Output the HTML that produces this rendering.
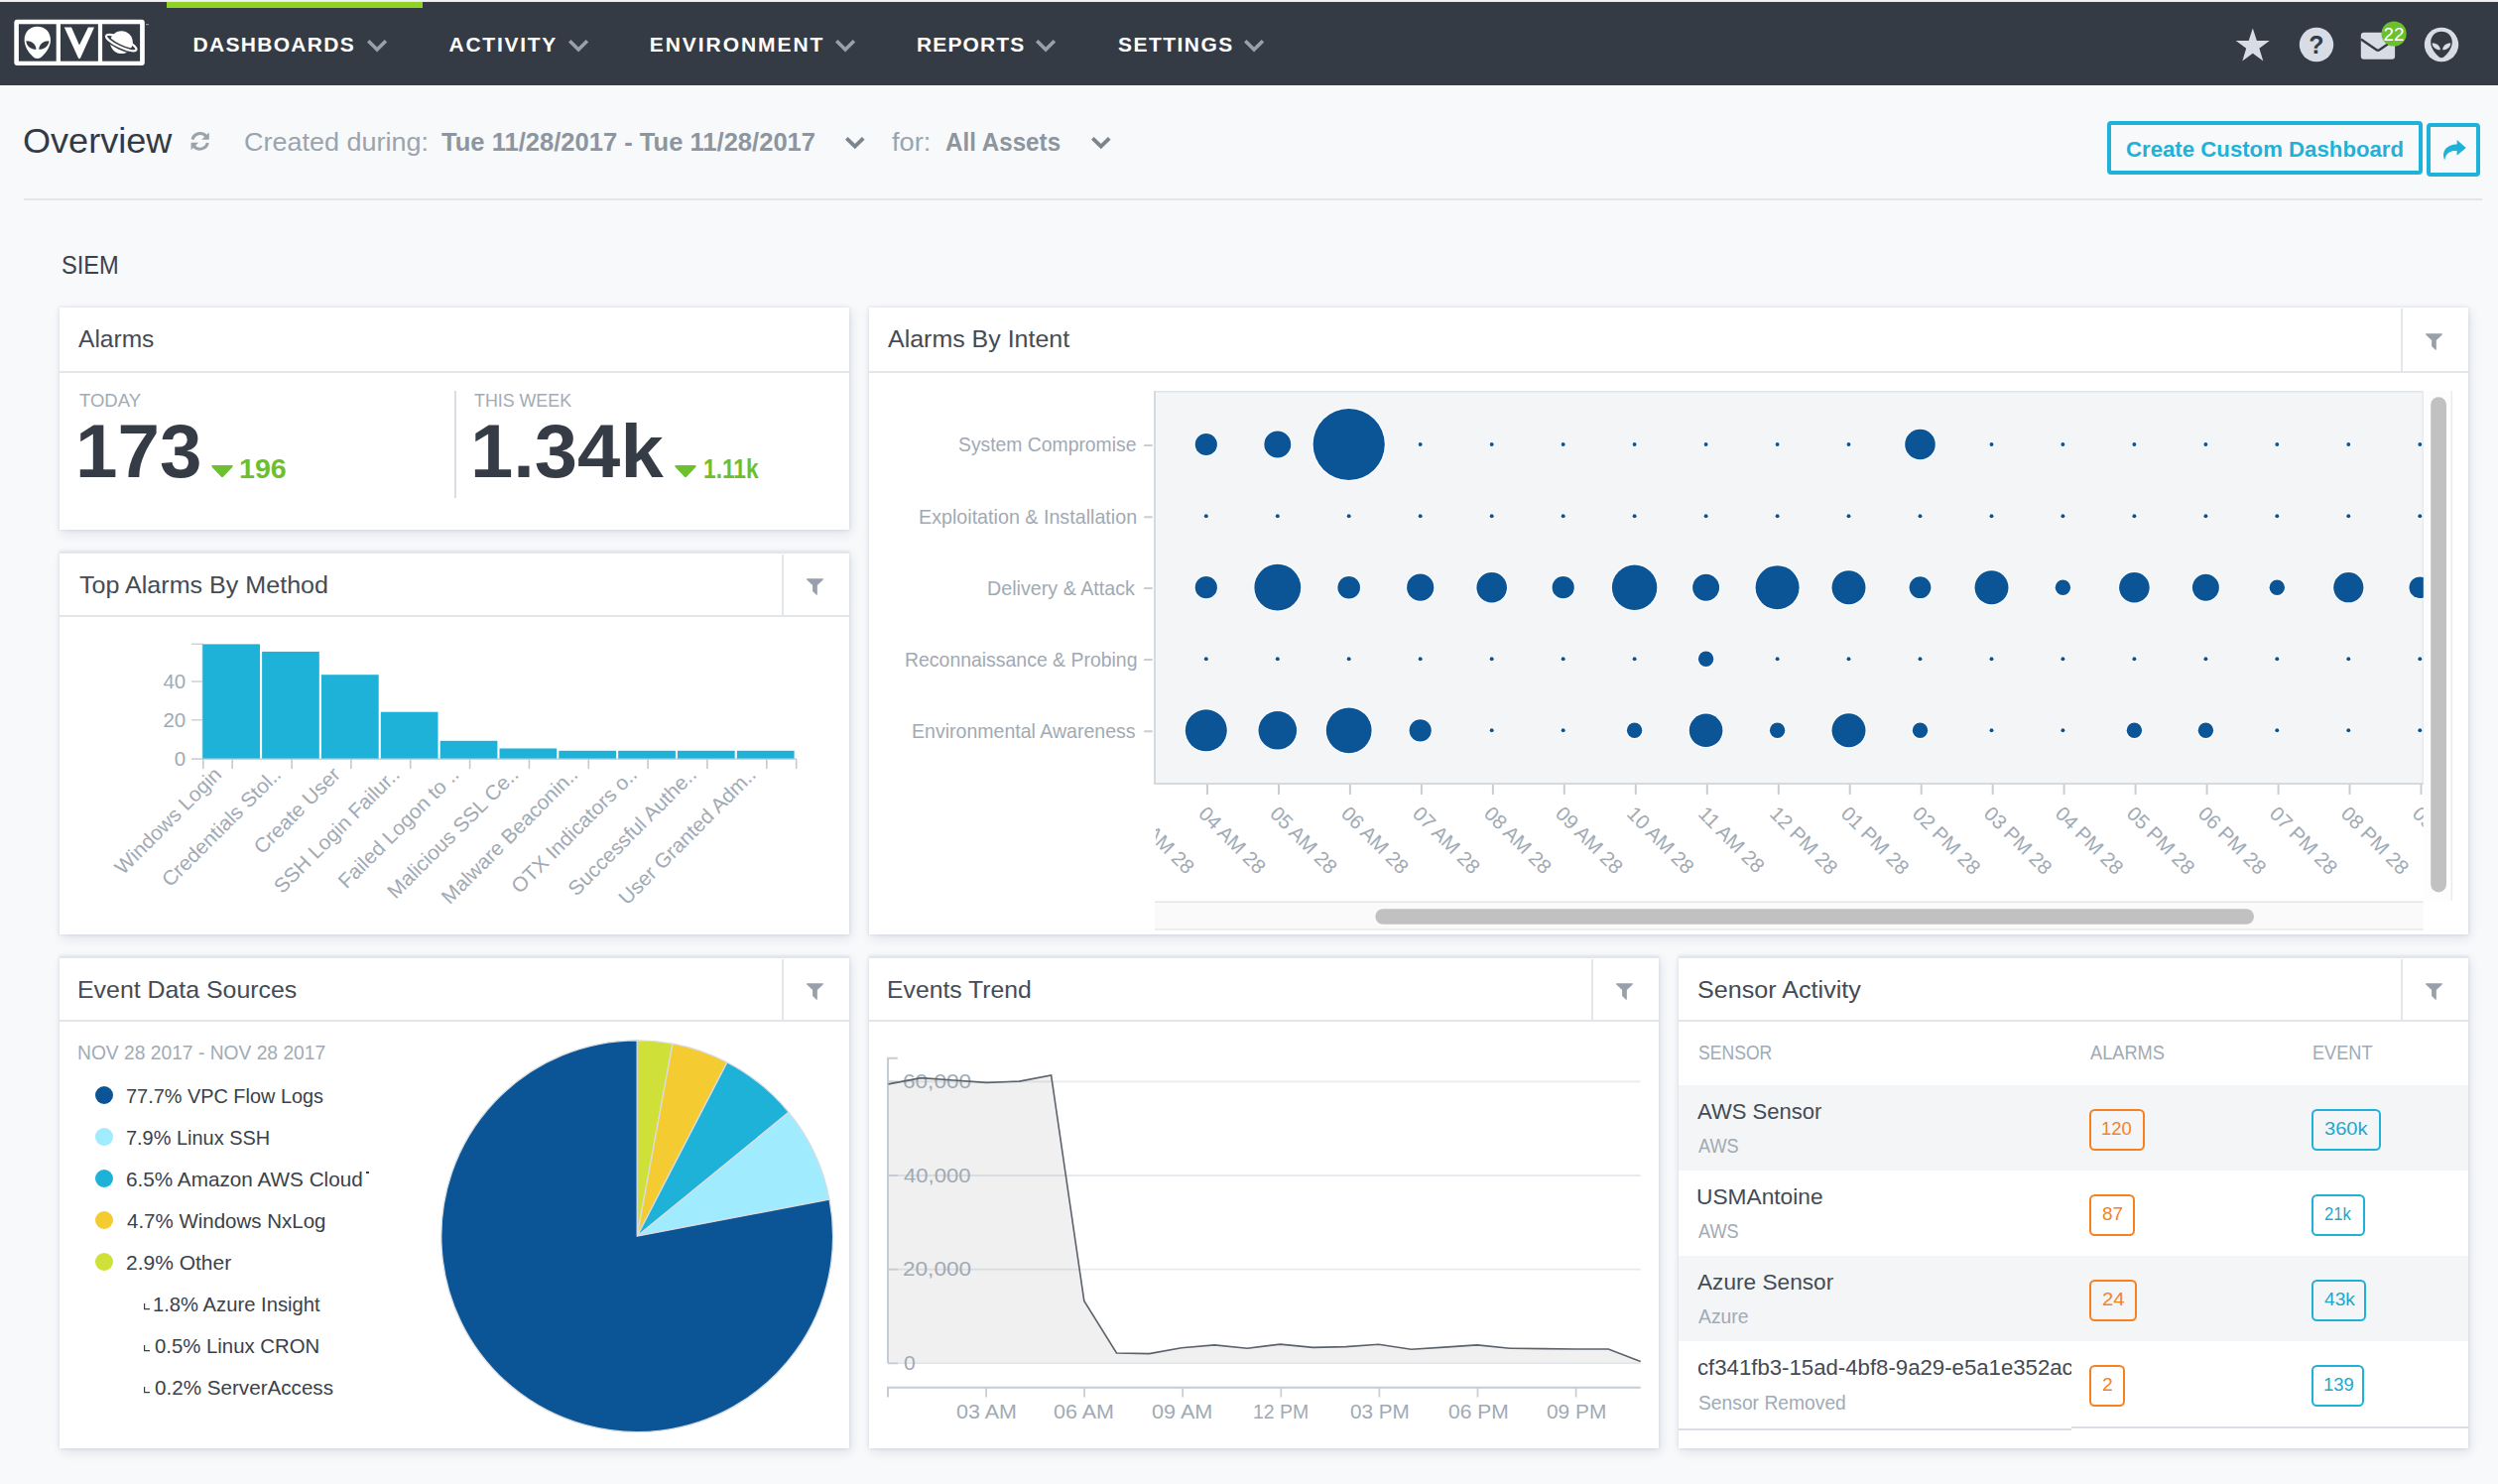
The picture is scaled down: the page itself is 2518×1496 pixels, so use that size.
<!DOCTYPE html>
<html lang="en"><head><meta charset="utf-8"><title>Overview - Dashboards</title>
<style>
*{box-sizing:border-box;margin:0;padding:0}
html,body{width:2518px;height:1496px;overflow:hidden}
body{position:relative;background:#f8f9fb;font-family:"Liberation Sans",sans-serif;color:#434a52}
.t{position:absolute;white-space:nowrap;line-height:1;transform-origin:0 0;display:block}
.abs{position:absolute}
#topstrip{position:absolute;left:0;top:0;width:2518px;height:2px;background:linear-gradient(#f6f6f6,#e6e6e6)}
#nav{position:absolute;left:0;top:2px;width:2518px;height:84px;background:#343b44}
#nav .active{position:absolute;left:168px;top:0;width:258px;height:6px;background:#90d226}
svg{position:absolute;overflow:visible}
.card{position:absolute;background:#fff;box-shadow:0 0 3px rgba(70,85,110,.17),2px 4px 10px rgba(70,85,110,.14)}
.card .hd{position:absolute;left:0;top:0;right:0;height:66px;border-bottom:2px solid #e3e7ec}
.card .fsep{position:absolute;top:0;width:2px;height:64px;background:#e3e7ec}
</style></head>
<body>
<div id="topstrip"></div>
<nav id="nav"><div class="active"></div>
<svg style="left:0;top:-2px" width="160" height="88" viewBox="0 0 160 88">
<rect x="14.3" y="19.8" width="131.5" height="46.3" rx="3" fill="#fff"/>
<rect x="18.9" y="24.3" width="37.8" height="37.4" fill="#343b44"/>
<rect x="61" y="24.3" width="37.9" height="37.4" fill="#343b44"/>
<rect x="103.1" y="24.3" width="38" height="37.4" fill="#343b44"/>
<path d="M37.7 26.8 C45.5 26.8 51 32.5 51 40.5 C51 48 44.5 55.5 40.8 58.2 C39.3 59.3 36.1 59.3 34.6 58.2 C30.9 55.5 24.6 48 24.6 40.5 C24.6 32.5 29.9 26.8 37.7 26.8 Z" fill="#fff"/>
<path d="M26.3 41.2 C31.5 41 36.3 44 36.5 49.8 C31 49.6 26.6 46.5 26.3 41.2 Z" fill="#343b44"/>
<path d="M49.4 41.2 C44.2 41 39.4 44 39.2 49.8 C44.7 49.6 49.1 46.5 49.4 41.2 Z" fill="#343b44"/>
<path d="M64.8 27.5 L72 27.5 L80 45.6 L88.9 27.5 L95 27.5 L81.2 58.3 Q80 60 78.8 58.3 Z" fill="#fff"/>
<g transform="rotate(25.5 122.2 43.1)">
<ellipse cx="122.2" cy="43.1" rx="16.8" ry="4.4" fill="none" stroke="#fff" stroke-width="2.2"/>
</g>
<circle cx="122.4" cy="42.6" r="11.4" fill="#fff"/>
<g transform="rotate(25.5 122.2 43.1)">
<path d="M105.4 43.1 A16.8 4.4 0 0 0 139 43.1" fill="none" stroke="#343b44" stroke-width="5.2"/>
<path d="M105.4 43.1 A16.8 4.4 0 0 0 139 43.1" fill="none" stroke="#fff" stroke-width="2.2"/>
</g>
<rect x="147" y="24" width="3" height="1.2" fill="#8b929b"/>
</svg>
<span class="t" style="left:194.6px;top:32.0px;font-size:21px;color:#fff;font-weight:700;letter-spacing:1.29px;">DASHBOARDS</span>
<svg style="left:370.0px;top:37.8px" width="20.2" height="12.6" viewBox="0 0 20.2 12.6"><path d="M1.27 1.27 L10.10 10.05 L18.93 1.27" fill="none" stroke="#98a1ab" stroke-width="3.6" stroke-linecap="butt" stroke-linejoin="miter"/></svg>
<span class="t" style="left:452.6px;top:32.0px;font-size:21px;color:#fff;font-weight:700;letter-spacing:1.72px;">ACTIVITY</span>
<svg style="left:573.0px;top:37.8px" width="20.2" height="12.6" viewBox="0 0 20.2 12.6"><path d="M1.27 1.27 L10.10 10.05 L18.93 1.27" fill="none" stroke="#98a1ab" stroke-width="3.6" stroke-linecap="butt" stroke-linejoin="miter"/></svg>
<span class="t" style="left:654.8px;top:32.0px;font-size:21px;color:#fff;font-weight:700;letter-spacing:1.94px;">ENVIRONMENT</span>
<svg style="left:842.2px;top:37.8px" width="20.2" height="12.6" viewBox="0 0 20.2 12.6"><path d="M1.27 1.27 L10.10 10.05 L18.93 1.27" fill="none" stroke="#98a1ab" stroke-width="3.6" stroke-linecap="butt" stroke-linejoin="miter"/></svg>
<span class="t" style="left:924.0px;top:32.0px;font-size:21px;color:#fff;font-weight:700;letter-spacing:1.13px;">REPORTS</span>
<svg style="left:1044.2px;top:37.8px" width="20.2" height="12.6" viewBox="0 0 20.2 12.6"><path d="M1.27 1.27 L10.10 10.05 L18.93 1.27" fill="none" stroke="#98a1ab" stroke-width="3.6" stroke-linecap="butt" stroke-linejoin="miter"/></svg>
<span class="t" style="left:1127.0px;top:32.0px;font-size:21px;color:#fff;font-weight:700;letter-spacing:1.47px;">SETTINGS</span>
<svg style="left:1254.4px;top:37.8px" width="20.2" height="12.6" viewBox="0 0 20.2 12.6"><path d="M1.27 1.27 L10.10 10.05 L18.93 1.27" fill="none" stroke="#98a1ab" stroke-width="3.6" stroke-linecap="butt" stroke-linejoin="miter"/></svg>
<svg style="left:2240px;top:-2px" width="270" height="88" viewBox="2240 0 270 88">
<path d="M2270.8 28.6 L2274.9 41.0 L2287.8 41.0 L2277.4 48.7 L2281.3 61.4 L2270.8 53.7 L2260.3 61.4 L2264.2 48.7 L2253.8 41.0 L2266.7 41.0 Z" fill="#d8dde5"/>
<circle cx="2335" cy="45" r="17.2" fill="#d8dde5"/>
<text x="2335" y="54" text-anchor="middle" font-family="Liberation Sans, sans-serif" font-weight="700" font-size="25" fill="#343b44">?</text>
<rect x="2379.8" y="32.8" width="34.3" height="27" rx="3" fill="#d8dde5"/>
<path d="M2379.8 39.5 L2395.5 50.2 Q2397 51.2 2398.5 50.2 L2414.1 39.5" fill="none" stroke="#343b44" stroke-width="2.4"/>
<circle cx="2413.1" cy="34" r="12.6" fill="#6cc02f"/>
<text x="2413.1" y="41.3" text-anchor="middle" font-family="Liberation Sans, sans-serif" font-size="19" fill="#fff" textLength="21" lengthAdjust="spacingAndGlyphs">22</text>
<circle cx="2461" cy="45" r="17.2" fill="#d8dde5"/>
<path d="M2461 31.8 C2467.3 31.8 2471.8 36.4 2471.8 42.6 C2471.8 49 2466.5 55 2463.4 57.5 C2462 58.6 2460 58.6 2458.6 57.5 C2455.5 55 2450.2 49 2450.2 42.6 C2450.2 36.4 2454.7 31.8 2461 31.8 Z" fill="#343b44"/>
<path d="M2451.6 43.4 C2455.8 43.2 2459.7 45.6 2459.9 50.3 C2455.4 50.2 2451.9 47.7 2451.6 43.4 Z" fill="#d8dde5"/>
<path d="M2470.4 43.4 C2466.2 43.2 2462.3 45.6 2462.1 50.3 C2466.6 50.2 2470.1 47.7 2470.4 43.4 Z" fill="#d8dde5"/>
</svg>
</nav>
<header id="hdr">
<span class="t" style="left:23.3px;top:125.0px;font-size:34.5px;color:#333a43;transform:scaleX(1.0458);">Overview</span>
<svg style="left:191px;top:132.1px" width="21.4" height="20.7" viewBox="0 0 22 22" preserveAspectRatio="none">
<path d="M3.2 9.2 A8 8 0 0 1 17.2 5.6" fill="none" stroke="#9aa3ab" stroke-width="3.2"/>
<path d="M20.4 1.6 L20.4 9.4 L12.6 9.4 Z" fill="#9aa3ab"/>
<path d="M18.8 12.8 A8 8 0 0 1 4.8 16.4" fill="none" stroke="#9aa3ab" stroke-width="3.2"/>
<path d="M1.6 20.4 L1.6 12.6 L9.4 12.6 Z" fill="#9aa3ab"/>
</svg>
<span class="t" style="left:245.5px;top:130.0px;font-size:26.5px;color:#9ba4ac;transform:scaleX(1.0189);">Created during:</span>
<span class="t" style="left:445.3px;top:130.0px;font-size:26.5px;color:#8d969e;font-weight:700;transform:scaleX(0.9645);">Tue 11/28/2017 - Tue 11/28/2017</span>
<svg style="left:851.6px;top:138.2px" width="19.6" height="12.4" viewBox="0 0 19.6 12.4"><path d="M1.34 1.34 L9.80 9.71 L18.26 1.34" fill="none" stroke="#7d858c" stroke-width="3.8" stroke-linecap="butt" stroke-linejoin="miter"/></svg>
<span class="t" style="left:899.3px;top:130.0px;font-size:26.5px;color:#9ba4ac;transform:scaleX(1.0271);">for:</span>
<span class="t" style="left:953.1px;top:130.0px;font-size:26.5px;color:#8d969e;font-weight:700;transform:scaleX(0.9129);">All Assets</span>
<svg style="left:1099.6px;top:138.2px" width="19.6" height="12.4" viewBox="0 0 19.6 12.4"><path d="M1.34 1.34 L9.80 9.71 L18.26 1.34" fill="none" stroke="#7d858c" stroke-width="3.8" stroke-linecap="butt" stroke-linejoin="miter"/></svg>
<div class="abs" style="left:2124.3px;top:122.1px;width:317.4px;height:53.7px;border:4px solid #1fb2d8;border-radius:4px"></div>
<span class="t" style="left:2142.7px;top:140.0px;font-size:22.4px;color:#1fb2d8;font-weight:700;transform:scaleX(0.9916);">Create Custom Dashboard</span>
<div class="abs" style="left:2446px;top:124.3px;width:53.9px;height:53.5px;border:4px solid #1fb2d8;border-radius:4px"></div>
<svg style="left:2461px;top:140px" width="26" height="23" viewBox="0 0 26 23">
<path d="M15.6 1 L24.8 8.9 L15.6 16.8 L15.6 12 C9.5 11.6 4.6 13.8 3.2 21.4 C-0.6 12.6 5.6 5.6 15.6 5.6 Z" fill="#1fb2d8"/>
</svg>
<div class="abs" style="left:24px;top:200px;width:2478px;height:2px;background:#e2e5ea"></div>
</header>
<span class="t" style="left:62.0px;top:255.0px;font-size:25px;color:#3c434b;transform:scaleX(0.9452);">SIEM</span>
<section class="card" id="alarms" style="left:60px;top:310px;width:796px;height:224px;">
<div class="abs" style="left:0;top:64px;width:796px;height:2px;background:#e3e7ec"></div>
<span class="t" style="left:19.2px;top:20.0px;font-size:24.8px;color:#434b54;transform:scaleX(0.9902);">Alarms</span>
<span class="t" style="left:19.5px;top:84.0px;font-size:19.2px;color:#a1abb5;transform:scaleX(0.9639);">TODAY</span>
<span class="t" style="left:15.5px;top:107.0px;font-size:76px;color:#363c45;font-weight:700;transform:scaleX(1.0047);">173</span>
<svg style="left:152.9px;top:158.9px" width="22" height="12.4" viewBox="0 0 22 12.4"><path d="M1.6 0 H20.4 Q22.6 0.2 21.2 2 L12.2 11.6 Q11 12.8 9.8 11.6 L0.8 2 Q-0.6 0.2 1.6 0 Z" fill="#6cbf2d"/></svg>
<span class="t" style="left:181.4px;top:150.0px;font-size:26.8px;color:#6cbf2d;font-weight:700;transform:scaleX(1.0676);">196</span>
<div class="abs" style="left:398px;top:84px;width:2px;height:108px;background:#d9dde3"></div>
<span class="t" style="left:418.2px;top:84.0px;font-size:19.2px;color:#a1abb5;transform:scaleX(0.9287);">THIS WEEK</span>
<span class="t" style="left:414.1px;top:107.0px;font-size:76px;color:#363c45;font-weight:700;transform:scaleX(1.0234);">1.34k</span>
<svg style="left:620.2px;top:158.9px" width="22" height="12.4" viewBox="0 0 22 12.4"><path d="M1.6 0 H20.4 Q22.6 0.2 21.2 2 L12.2 11.6 Q11 12.8 9.8 11.6 L0.8 2 Q-0.6 0.2 1.6 0 Z" fill="#6cbf2d"/></svg>
<span class="t" style="left:649.1px;top:150.0px;font-size:26.8px;color:#6cbf2d;font-weight:700;transform:scaleX(0.8473);">1.11k</span>
</section>
<section class="card" id="top-alarms" style="left:60px;top:556px;width:796px;height:386px;border-top:2px solid #e3e6ea;">
<div class="abs" style="left:0;top:62px;width:796px;height:2px;background:#e3e7ec"></div>
<span class="t" style="left:19.6px;top:20.0px;font-size:24.8px;color:#434b54;transform:scaleX(1.0118);">Top Alarms By Method</span>
<div class="abs" style="left:728px;top:1px;width:2px;height:61px;background:#e3e7ec"></div>
<svg style="left:753px;top:24.7px" width="17" height="17" viewBox="0 0 17 17"><path d="M0.3 0.3 H16.7 Q17.2 0.8 16.7 1.4 L10.85 7 V16.4 Q10.4 16.9 9.7 16.4 L6.1 13.1 V7 L0.3 1.4 Q-0.2 0.8 0.3 0.3 Z" fill="#98a1ab"/></svg>
<svg style="left:0;top:0" width="796" height="384" viewBox="60 558 796 384" font-family="Liberation Sans, sans-serif">
<path d="M193 649.3 H204.3 V765.1 M193 687 H204.3 M193 725.8 H204.3" fill="none" stroke="#cdd2d8" stroke-width="1.4"/>
<path d="M193 765.1 H802.7" fill="none" stroke="#cdd2d8" stroke-width="1.6"/>
<text x="187.2" y="694.2" text-anchor="end" font-size="20.5" fill="#a1aab4">40</text>
<text x="187.2" y="733.0" text-anchor="end" font-size="20.5" fill="#a1aab4">20</text>
<text x="187.2" y="771.8" text-anchor="end" font-size="20.5" fill="#a1aab4">0</text>
<rect x="204.3" y="649.4" width="57.7" height="115.2" fill="#1fb2d8"/>
<rect x="264.1" y="656.9" width="57.7" height="107.7" fill="#1fb2d8"/>
<rect x="324.0" y="680.2" width="57.7" height="84.4" fill="#1fb2d8"/>
<rect x="383.8" y="717.7" width="57.7" height="46.9" fill="#1fb2d8"/>
<rect x="443.7" y="746.8" width="57.7" height="17.8" fill="#1fb2d8"/>
<rect x="503.5" y="754.5" width="57.7" height="10.1" fill="#1fb2d8"/>
<rect x="563.3" y="756.8" width="57.7" height="7.8" fill="#1fb2d8"/>
<rect x="623.2" y="756.8" width="57.7" height="7.8" fill="#1fb2d8"/>
<rect x="683.0" y="756.8" width="57.7" height="7.8" fill="#1fb2d8"/>
<rect x="742.9" y="756.8" width="57.7" height="7.8" fill="#1fb2d8"/>
<path d="M204.8 765.1 V774.9 M234.2 765.1 V774.9 M294.1 765.1 V774.9 M353.9 765.1 V774.9 M413.7 765.1 V774.9 M473.6 765.1 V774.9 M533.4 765.1 V774.9 M593.3 765.1 V774.9 M653.1 765.1 V774.9 M712.9 765.1 V774.9 M772.8 765.1 V774.9 M802.7 765.1 V774.9" fill="none" stroke="#c5cad1" stroke-width="1.6"/>
<text transform="translate(224.6 782) rotate(-45) scale(1.025 1)" text-anchor="end" font-size="20.5" fill="#a1aab4">Windows Login</text>
<text transform="translate(284.5 782) rotate(-45) scale(1.025 1)" text-anchor="end" font-size="20.5" fill="#a1aab4">Credentials Stol..</text>
<text transform="translate(344.3 782) rotate(-45) scale(1.025 1)" text-anchor="end" font-size="20.5" fill="#a1aab4">Create User</text>
<text transform="translate(404.1 782) rotate(-45) scale(1.025 1)" text-anchor="end" font-size="20.5" fill="#a1aab4">SSH Login Failur..</text>
<text transform="translate(464.0 782) rotate(-45) scale(1.025 1)" text-anchor="end" font-size="20.5" fill="#a1aab4">Failed Logon to ..</text>
<text transform="translate(523.8 782) rotate(-45) scale(1.025 1)" text-anchor="end" font-size="20.5" fill="#a1aab4">Malicious SSL Ce..</text>
<text transform="translate(583.7 782) rotate(-45) scale(1.025 1)" text-anchor="end" font-size="20.5" fill="#a1aab4">Malware Beaconin..</text>
<text transform="translate(643.5 782) rotate(-45) scale(1.025 1)" text-anchor="end" font-size="20.5" fill="#a1aab4">OTX Indicators o..</text>
<text transform="translate(703.3 782) rotate(-45) scale(1.025 1)" text-anchor="end" font-size="20.5" fill="#a1aab4">Successful Authe..</text>
<text transform="translate(763.2 782) rotate(-45) scale(1.025 1)" text-anchor="end" font-size="20.5" fill="#a1aab4">User Granted Adm..</text>
</svg>
</section>
<section class="card" id="alarms-intent" style="left:876px;top:310px;width:1612px;height:632px;">
<div class="abs" style="left:0;top:64px;width:1612px;height:2px;background:#e3e7ec"></div>
<span class="t" style="left:19.0px;top:20.0px;font-size:24.8px;color:#434b54;transform:scaleX(1.0065);">Alarms By Intent</span>
<div class="abs" style="left:1544px;top:1px;width:2px;height:63px;background:#e3e7ec"></div>
<svg style="left:1569px;top:26.3px" width="17" height="17" viewBox="0 0 17 17"><path d="M0.3 0.3 H16.7 Q17.2 0.8 16.7 1.4 L10.85 7 V16.4 Q10.4 16.9 9.7 16.4 L6.1 13.1 V7 L0.3 1.4 Q-0.2 0.8 0.3 0.3 Z" fill="#98a1ab"/></svg>
<span class="t" style="left:89.9px;top:129.0px;font-size:19.8px;color:#a1aab4;transform:scaleX(0.9773);">System Compromise</span>
<span class="t" style="left:50.2px;top:202.0px;font-size:19.8px;color:#a1aab4;transform:scaleX(0.9958);">Exploitation &amp; Installation</span>
<span class="t" style="left:119.2px;top:274.0px;font-size:19.8px;color:#a1aab4;transform:scaleX(0.9959);">Delivery &amp; Attack</span>
<span class="t" style="left:35.8px;top:346.0px;font-size:19.8px;color:#a1aab4;transform:scaleX(0.9826);">Reconnaissance &amp; Probing</span>
<span class="t" style="left:42.5px;top:418.0px;font-size:19.8px;color:#a1aab4;transform:scaleX(0.9880);">Environmental Awareness</span>
<svg style="left:0;top:0" width="1612" height="632" viewBox="876 310 1612 632" font-family="Liberation Sans, sans-serif">
<defs><clipPath id="bclip"><rect x="1165" y="394" width="1277.8" height="520"/></clipPath></defs>
<rect x="1164" y="394" width="1278.8" height="396" fill="#f4f5f7"/>
<path d="M1164 394.8 H2442.8" stroke="#dfe3e8" stroke-width="1.6" fill="none"/>
<path d="M2442.2 394 V790" stroke="#e6e9ed" stroke-width="1.4" fill="none"/>
<path d="M1164 394 V789.9 H2442.8" stroke="#d5dae0" stroke-width="2" fill="none"/>
<path d="M1153.1 448.9 H1161.7 M1153.1 521.2 H1161.7 M1153.1 593.1 H1161.7 M1153.1 665.1 H1161.7 M1153.1 737.2 H1161.7" stroke="#c9ced5" stroke-width="2" fill="none"/>
<g clip-path="url(#bclip)">
<circle cx="1215.8" cy="448.0" r="11.1" fill="#0b5596" stroke="#fff" stroke-width="2" paint-order="stroke"/>
<circle cx="1287.8" cy="448.0" r="13.45" fill="#0b5596" stroke="#fff" stroke-width="2" paint-order="stroke"/>
<circle cx="1359.7" cy="448.0" r="36.1" fill="#0b5596" stroke="#fff" stroke-width="2" paint-order="stroke"/>
<circle cx="1431.7" cy="448.0" r="2.0" fill="#0b5596" stroke="#fff" stroke-width="1.4" paint-order="stroke"/>
<circle cx="1503.7" cy="448.0" r="2.0" fill="#0b5596" stroke="#fff" stroke-width="1.4" paint-order="stroke"/>
<circle cx="1575.7" cy="448.0" r="2.0" fill="#0b5596" stroke="#fff" stroke-width="1.4" paint-order="stroke"/>
<circle cx="1647.6" cy="448.0" r="2.0" fill="#0b5596" stroke="#fff" stroke-width="1.4" paint-order="stroke"/>
<circle cx="1719.6" cy="448.0" r="2.0" fill="#0b5596" stroke="#fff" stroke-width="1.4" paint-order="stroke"/>
<circle cx="1791.6" cy="448.0" r="2.0" fill="#0b5596" stroke="#fff" stroke-width="1.4" paint-order="stroke"/>
<circle cx="1863.5" cy="448.0" r="2.0" fill="#0b5596" stroke="#fff" stroke-width="1.4" paint-order="stroke"/>
<circle cx="1935.5" cy="448.0" r="15.3" fill="#0b5596" stroke="#fff" stroke-width="2" paint-order="stroke"/>
<circle cx="2007.5" cy="448.0" r="2.0" fill="#0b5596" stroke="#fff" stroke-width="1.4" paint-order="stroke"/>
<circle cx="2079.4" cy="448.0" r="2.0" fill="#0b5596" stroke="#fff" stroke-width="1.4" paint-order="stroke"/>
<circle cx="2151.4" cy="448.0" r="2.0" fill="#0b5596" stroke="#fff" stroke-width="1.4" paint-order="stroke"/>
<circle cx="2223.4" cy="448.0" r="2.0" fill="#0b5596" stroke="#fff" stroke-width="1.4" paint-order="stroke"/>
<circle cx="2295.3" cy="448.0" r="2.0" fill="#0b5596" stroke="#fff" stroke-width="1.4" paint-order="stroke"/>
<circle cx="2367.3" cy="448.0" r="2.0" fill="#0b5596" stroke="#fff" stroke-width="1.4" paint-order="stroke"/>
<circle cx="2439.3" cy="448.0" r="2.0" fill="#0b5596" stroke="#fff" stroke-width="1.4" paint-order="stroke"/>
<circle cx="1215.8" cy="520.3" r="2.0" fill="#0b5596" stroke="#fff" stroke-width="1.4" paint-order="stroke"/>
<circle cx="1287.8" cy="520.3" r="2.0" fill="#0b5596" stroke="#fff" stroke-width="1.4" paint-order="stroke"/>
<circle cx="1359.7" cy="520.3" r="2.0" fill="#0b5596" stroke="#fff" stroke-width="1.4" paint-order="stroke"/>
<circle cx="1431.7" cy="520.3" r="2.0" fill="#0b5596" stroke="#fff" stroke-width="1.4" paint-order="stroke"/>
<circle cx="1503.7" cy="520.3" r="2.0" fill="#0b5596" stroke="#fff" stroke-width="1.4" paint-order="stroke"/>
<circle cx="1575.7" cy="520.3" r="2.0" fill="#0b5596" stroke="#fff" stroke-width="1.4" paint-order="stroke"/>
<circle cx="1647.6" cy="520.3" r="2.0" fill="#0b5596" stroke="#fff" stroke-width="1.4" paint-order="stroke"/>
<circle cx="1719.6" cy="520.3" r="2.0" fill="#0b5596" stroke="#fff" stroke-width="1.4" paint-order="stroke"/>
<circle cx="1791.6" cy="520.3" r="2.0" fill="#0b5596" stroke="#fff" stroke-width="1.4" paint-order="stroke"/>
<circle cx="1863.5" cy="520.3" r="2.0" fill="#0b5596" stroke="#fff" stroke-width="1.4" paint-order="stroke"/>
<circle cx="1935.5" cy="520.3" r="2.0" fill="#0b5596" stroke="#fff" stroke-width="1.4" paint-order="stroke"/>
<circle cx="2007.5" cy="520.3" r="2.0" fill="#0b5596" stroke="#fff" stroke-width="1.4" paint-order="stroke"/>
<circle cx="2079.4" cy="520.3" r="2.0" fill="#0b5596" stroke="#fff" stroke-width="1.4" paint-order="stroke"/>
<circle cx="2151.4" cy="520.3" r="2.0" fill="#0b5596" stroke="#fff" stroke-width="1.4" paint-order="stroke"/>
<circle cx="2223.4" cy="520.3" r="2.0" fill="#0b5596" stroke="#fff" stroke-width="1.4" paint-order="stroke"/>
<circle cx="2295.3" cy="520.3" r="2.0" fill="#0b5596" stroke="#fff" stroke-width="1.4" paint-order="stroke"/>
<circle cx="2367.3" cy="520.3" r="2.0" fill="#0b5596" stroke="#fff" stroke-width="1.4" paint-order="stroke"/>
<circle cx="2439.3" cy="520.3" r="2.0" fill="#0b5596" stroke="#fff" stroke-width="1.4" paint-order="stroke"/>
<circle cx="1215.8" cy="592.2" r="11.1" fill="#0b5596" stroke="#fff" stroke-width="2" paint-order="stroke"/>
<circle cx="1287.8" cy="592.2" r="23.4" fill="#0b5596" stroke="#fff" stroke-width="2" paint-order="stroke"/>
<circle cx="1359.7" cy="592.2" r="11.3" fill="#0b5596" stroke="#fff" stroke-width="2" paint-order="stroke"/>
<circle cx="1431.7" cy="592.2" r="13.6" fill="#0b5596" stroke="#fff" stroke-width="2" paint-order="stroke"/>
<circle cx="1503.7" cy="592.2" r="15.3" fill="#0b5596" stroke="#fff" stroke-width="2" paint-order="stroke"/>
<circle cx="1575.7" cy="592.2" r="11.1" fill="#0b5596" stroke="#fff" stroke-width="2" paint-order="stroke"/>
<circle cx="1647.6" cy="592.2" r="22.7" fill="#0b5596" stroke="#fff" stroke-width="2" paint-order="stroke"/>
<circle cx="1719.6" cy="592.2" r="13.45" fill="#0b5596" stroke="#fff" stroke-width="2" paint-order="stroke"/>
<circle cx="1791.6" cy="592.2" r="22" fill="#0b5596" stroke="#fff" stroke-width="2" paint-order="stroke"/>
<circle cx="1863.5" cy="592.2" r="17" fill="#0b5596" stroke="#fff" stroke-width="2" paint-order="stroke"/>
<circle cx="1935.5" cy="592.2" r="10.9" fill="#0b5596" stroke="#fff" stroke-width="2" paint-order="stroke"/>
<circle cx="2007.5" cy="592.2" r="17" fill="#0b5596" stroke="#fff" stroke-width="2" paint-order="stroke"/>
<circle cx="2079.4" cy="592.2" r="7.7" fill="#0b5596" stroke="#fff" stroke-width="2" paint-order="stroke"/>
<circle cx="2151.4" cy="592.2" r="15.3" fill="#0b5596" stroke="#fff" stroke-width="2" paint-order="stroke"/>
<circle cx="2223.4" cy="592.2" r="13.45" fill="#0b5596" stroke="#fff" stroke-width="2" paint-order="stroke"/>
<circle cx="2295.3" cy="592.2" r="7.7" fill="#0b5596" stroke="#fff" stroke-width="2" paint-order="stroke"/>
<circle cx="2367.3" cy="592.2" r="15.1" fill="#0b5596" stroke="#fff" stroke-width="2" paint-order="stroke"/>
<circle cx="2439.3" cy="592.2" r="10.8" fill="#0b5596" stroke="#fff" stroke-width="2" paint-order="stroke"/>
<circle cx="1215.8" cy="664.2" r="2.0" fill="#0b5596" stroke="#fff" stroke-width="1.4" paint-order="stroke"/>
<circle cx="1287.8" cy="664.2" r="2.0" fill="#0b5596" stroke="#fff" stroke-width="1.4" paint-order="stroke"/>
<circle cx="1359.7" cy="664.2" r="2.0" fill="#0b5596" stroke="#fff" stroke-width="1.4" paint-order="stroke"/>
<circle cx="1431.7" cy="664.2" r="2.0" fill="#0b5596" stroke="#fff" stroke-width="1.4" paint-order="stroke"/>
<circle cx="1503.7" cy="664.2" r="2.0" fill="#0b5596" stroke="#fff" stroke-width="1.4" paint-order="stroke"/>
<circle cx="1575.7" cy="664.2" r="2.0" fill="#0b5596" stroke="#fff" stroke-width="1.4" paint-order="stroke"/>
<circle cx="1647.6" cy="664.2" r="2.0" fill="#0b5596" stroke="#fff" stroke-width="1.4" paint-order="stroke"/>
<circle cx="1719.6" cy="664.2" r="7.7" fill="#0b5596" stroke="#fff" stroke-width="2" paint-order="stroke"/>
<circle cx="1791.6" cy="664.2" r="2.0" fill="#0b5596" stroke="#fff" stroke-width="1.4" paint-order="stroke"/>
<circle cx="1863.5" cy="664.2" r="2.0" fill="#0b5596" stroke="#fff" stroke-width="1.4" paint-order="stroke"/>
<circle cx="1935.5" cy="664.2" r="2.0" fill="#0b5596" stroke="#fff" stroke-width="1.4" paint-order="stroke"/>
<circle cx="2007.5" cy="664.2" r="2.0" fill="#0b5596" stroke="#fff" stroke-width="1.4" paint-order="stroke"/>
<circle cx="2079.4" cy="664.2" r="2.0" fill="#0b5596" stroke="#fff" stroke-width="1.4" paint-order="stroke"/>
<circle cx="2151.4" cy="664.2" r="2.0" fill="#0b5596" stroke="#fff" stroke-width="1.4" paint-order="stroke"/>
<circle cx="2223.4" cy="664.2" r="2.0" fill="#0b5596" stroke="#fff" stroke-width="1.4" paint-order="stroke"/>
<circle cx="2295.3" cy="664.2" r="2.0" fill="#0b5596" stroke="#fff" stroke-width="1.4" paint-order="stroke"/>
<circle cx="2367.3" cy="664.2" r="2.0" fill="#0b5596" stroke="#fff" stroke-width="1.4" paint-order="stroke"/>
<circle cx="2439.3" cy="664.2" r="2.0" fill="#0b5596" stroke="#fff" stroke-width="1.4" paint-order="stroke"/>
<circle cx="1215.8" cy="736.3" r="21" fill="#0b5596" stroke="#fff" stroke-width="2" paint-order="stroke"/>
<circle cx="1287.8" cy="736.3" r="19.3" fill="#0b5596" stroke="#fff" stroke-width="2" paint-order="stroke"/>
<circle cx="1359.7" cy="736.3" r="22.9" fill="#0b5596" stroke="#fff" stroke-width="2" paint-order="stroke"/>
<circle cx="1431.7" cy="736.3" r="11.1" fill="#0b5596" stroke="#fff" stroke-width="2" paint-order="stroke"/>
<circle cx="1503.7" cy="736.3" r="2.0" fill="#0b5596" stroke="#fff" stroke-width="1.4" paint-order="stroke"/>
<circle cx="1575.7" cy="736.3" r="2.0" fill="#0b5596" stroke="#fff" stroke-width="1.4" paint-order="stroke"/>
<circle cx="1647.6" cy="736.3" r="7.7" fill="#0b5596" stroke="#fff" stroke-width="2" paint-order="stroke"/>
<circle cx="1719.6" cy="736.3" r="16.8" fill="#0b5596" stroke="#fff" stroke-width="2" paint-order="stroke"/>
<circle cx="1791.6" cy="736.3" r="7.7" fill="#0b5596" stroke="#fff" stroke-width="2" paint-order="stroke"/>
<circle cx="1863.5" cy="736.3" r="17" fill="#0b5596" stroke="#fff" stroke-width="2" paint-order="stroke"/>
<circle cx="1935.5" cy="736.3" r="7.7" fill="#0b5596" stroke="#fff" stroke-width="2" paint-order="stroke"/>
<circle cx="2007.5" cy="736.3" r="2.0" fill="#0b5596" stroke="#fff" stroke-width="1.4" paint-order="stroke"/>
<circle cx="2079.4" cy="736.3" r="2.0" fill="#0b5596" stroke="#fff" stroke-width="1.4" paint-order="stroke"/>
<circle cx="2151.4" cy="736.3" r="7.7" fill="#0b5596" stroke="#fff" stroke-width="2" paint-order="stroke"/>
<circle cx="2223.4" cy="736.3" r="7.7" fill="#0b5596" stroke="#fff" stroke-width="2" paint-order="stroke"/>
<circle cx="2295.3" cy="736.3" r="2.0" fill="#0b5596" stroke="#fff" stroke-width="1.4" paint-order="stroke"/>
<circle cx="2367.3" cy="736.3" r="2.0" fill="#0b5596" stroke="#fff" stroke-width="1.4" paint-order="stroke"/>
<circle cx="2439.3" cy="736.3" r="2.0" fill="#0b5596" stroke="#fff" stroke-width="1.4" paint-order="stroke"/>
<path d="M1217.0 790.8 V801 M1289.0 790.8 V801 M1360.9 790.8 V801 M1432.9 790.8 V801 M1504.9 790.8 V801 M1576.8 790.8 V801 M1648.8 790.8 V801 M1720.8 790.8 V801 M1792.8 790.8 V801 M1864.7 790.8 V801 M1936.7 790.8 V801 M2008.7 790.8 V801 M2080.6 790.8 V801 M2152.6 790.8 V801 M2224.6 790.8 V801 M2296.6 790.8 V801 M2368.5 790.8 V801 M2440.5 790.8 V801" stroke="#c9ced5" stroke-width="2" fill="none"/>
<text transform="translate(1134.9 821.6) rotate(45)" font-size="20.3" fill="#a1aab4">03 AM 28</text>
<text transform="translate(1206.9 821.6) rotate(45)" font-size="20.3" fill="#a1aab4">04 AM 28</text>
<text transform="translate(1278.9 821.6) rotate(45)" font-size="20.3" fill="#a1aab4">05 AM 28</text>
<text transform="translate(1350.8 821.6) rotate(45)" font-size="20.3" fill="#a1aab4">06 AM 28</text>
<text transform="translate(1422.8 821.6) rotate(45)" font-size="20.3" fill="#a1aab4">07 AM 28</text>
<text transform="translate(1494.8 821.6) rotate(45)" font-size="20.3" fill="#a1aab4">08 AM 28</text>
<text transform="translate(1566.8 821.6) rotate(45)" font-size="20.3" fill="#a1aab4">09 AM 28</text>
<text transform="translate(1638.7 821.6) rotate(45)" font-size="20.3" fill="#a1aab4">10 AM 28</text>
<text transform="translate(1710.7 821.6) rotate(45)" font-size="20.3" fill="#a1aab4">11 AM 28</text>
<text transform="translate(1782.7 821.6) rotate(45)" font-size="20.3" fill="#a1aab4">12 PM 28</text>
<text transform="translate(1854.6 821.6) rotate(45)" font-size="20.3" fill="#a1aab4">01 PM 28</text>
<text transform="translate(1926.6 821.6) rotate(45)" font-size="20.3" fill="#a1aab4">02 PM 28</text>
<text transform="translate(1998.6 821.6) rotate(45)" font-size="20.3" fill="#a1aab4">03 PM 28</text>
<text transform="translate(2070.5 821.6) rotate(45)" font-size="20.3" fill="#a1aab4">04 PM 28</text>
<text transform="translate(2142.5 821.6) rotate(45)" font-size="20.3" fill="#a1aab4">05 PM 28</text>
<text transform="translate(2214.5 821.6) rotate(45)" font-size="20.3" fill="#a1aab4">06 PM 28</text>
<text transform="translate(2286.4 821.6) rotate(45)" font-size="20.3" fill="#a1aab4">07 PM 28</text>
<text transform="translate(2358.4 821.6) rotate(45)" font-size="20.3" fill="#a1aab4">08 PM 28</text>
<text transform="translate(2430.4 821.6) rotate(45)" font-size="20.3" fill="#a1aab4">09 PM 28</text>
</g>
<rect x="2443" y="394" width="28.6" height="514" fill="#fdfdfd"/>
<path d="M2471.4 394 V908" stroke="#e9ebee" stroke-width="1.4" fill="none"/>
<rect x="2450.2" y="400.2" width="15.8" height="499.2" rx="7.9" fill="#c1c1c1"/>
<rect x="1164" y="908.8" width="1278.8" height="28.6" fill="#fafafa"/>
<path d="M1164 909.3 H2442.8 M1164 936.9 H2442.8" stroke="#e6e6e6" stroke-width="1.4" fill="none"/>
<rect x="1386.3" y="916.2" width="885.7" height="15.6" rx="7.8" fill="#c1c1c1"/>
</svg>
</section>
<section class="card" id="event-sources" style="left:60px;top:964px;width:796px;height:496.3px;border-top:2px solid #e3e6ea;">
<div class="abs" style="left:0;top:62px;width:796px;height:2px;background:#e3e7ec"></div>
<span class="t" style="left:17.8px;top:20.0px;font-size:24.8px;color:#434b54;transform:scaleX(1.0035);">Event Data Sources</span>
<div class="abs" style="left:728px;top:1px;width:2px;height:61px;background:#e3e7ec"></div>
<svg style="left:753px;top:24.7px" width="17" height="17" viewBox="0 0 17 17"><path d="M0.3 0.3 H16.7 Q17.2 0.8 16.7 1.4 L10.85 7 V16.4 Q10.4 16.9 9.7 16.4 L6.1 13.1 V7 L0.3 1.4 Q-0.2 0.8 0.3 0.3 Z" fill="#98a1ab"/></svg>
<span class="t" style="left:17.5px;top:86.0px;font-size:19.4px;color:#a1abb5;transform:scaleX(0.9918);">NOV 28 2017 - NOV 28 2017</span>
<div class="abs" style="left:35.9px;top:129.3px;width:18.2px;height:18.2px;border-radius:50%;background:#0b5596"></div>
<span class="t" style="left:66.6px;top:128.0px;font-size:21px;color:#3a4149;transform:scaleX(0.9473);">77.7% VPC Flow Logs</span>
<div class="abs" style="left:35.9px;top:171.3px;width:18.2px;height:18.2px;border-radius:50%;background:#a0ebfd"></div>
<span class="t" style="left:66.6px;top:170.0px;font-size:21px;color:#3a4149;transform:scaleX(0.9492);">7.9% Linux SSH</span>
<div class="abs" style="left:35.9px;top:213.2px;width:18.2px;height:18.2px;border-radius:50%;background:#1fb2d8"></div>
<span class="t" style="left:66.5px;top:212.0px;font-size:21px;color:#3a4149;transform:scaleX(0.9866);">6.5% Amazon AWS Cloud</span>
<div class="abs" style="left:35.9px;top:255.2px;width:18.2px;height:18.2px;border-radius:50%;background:#f4cb30"></div>
<span class="t" style="left:67.5px;top:254.0px;font-size:21px;color:#3a4149;transform:scaleX(0.9758);">4.7% Windows NxLog</span>
<div class="abs" style="left:35.9px;top:297.1px;width:18.2px;height:18.2px;border-radius:50%;background:#cfe039"></div>
<span class="t" style="left:66.5px;top:296.0px;font-size:21px;color:#3a4149;transform:scaleX(0.9997);">2.9% Other</span>
<div class="abs" style="left:308.6px;top:215.4px;width:3.5px;height:1.6px;background:#3a4149"></div>
<svg style="left:84.8px;top:347.9px" width="7" height="7" viewBox="0 0 7 7"><path d="M0.6 0 V5.6 H6" fill="none" stroke="#3a4149" stroke-width="1.2"/></svg>
<span class="t" style="left:93.9px;top:338.0px;font-size:21px;color:#3a4149;transform:scaleX(0.9633);">1.8% Azure Insight</span>
<svg style="left:84.8px;top:389.8px" width="7" height="7" viewBox="0 0 7 7"><path d="M0.6 0 V5.6 H6" fill="none" stroke="#3a4149" stroke-width="1.2"/></svg>
<span class="t" style="left:95.6px;top:380.0px;font-size:21px;color:#3a4149;transform:scaleX(0.9689);">0.5% Linux CRON</span>
<svg style="left:84.8px;top:431.7px" width="7" height="7" viewBox="0 0 7 7"><path d="M0.6 0 V5.6 H6" fill="none" stroke="#3a4149" stroke-width="1.2"/></svg>
<span class="t" style="left:95.6px;top:422.0px;font-size:21px;color:#3a4149;transform:scaleX(0.9823);">0.2% ServerAccess</span>
<svg style="left:0;top:0" width="796" height="494.3" viewBox="60 966 796 494.3">
<path d="M642.2 1246.2 L642.20 1048.80 A197.4 197.4 0 0 1 677.97 1052.07 Z" fill="#cfe039" stroke="#d9dde2" stroke-width="1.3" stroke-linejoin="round"/>
<path d="M642.2 1246.2 L677.97 1052.07 A197.4 197.4 0 0 1 732.92 1070.88 Z" fill="#f4cb30" stroke="#d9dde2" stroke-width="1.3" stroke-linejoin="round"/>
<path d="M642.2 1246.2 L732.92 1070.88 A197.4 197.4 0 0 1 795.09 1121.33 Z" fill="#1fb2d8" stroke="#d9dde2" stroke-width="1.3" stroke-linejoin="round"/>
<path d="M642.2 1246.2 L795.09 1121.33 A197.4 197.4 0 0 1 836.10 1209.21 Z" fill="#a0ebfd" stroke="#d9dde2" stroke-width="1.3" stroke-linejoin="round"/>
<path d="M642.2 1246.2 L836.10 1209.21 A197.4 197.4 0 1 1 642.20 1048.80 Z" fill="#0b5596" stroke="#d9dde2" stroke-width="1.3" stroke-linejoin="round"/>
</svg>
</section>
<section class="card" id="events-trend" style="left:876px;top:964px;width:796.3px;height:496.3px;border-top:2px solid #e3e6ea;">
<div class="abs" style="left:0;top:62px;width:796.3px;height:2px;background:#e3e7ec"></div>
<span class="t" style="left:18.2px;top:20.0px;font-size:24.8px;color:#434b54;transform:scaleX(0.9982);">Events Trend</span>
<div class="abs" style="left:728.3px;top:1px;width:2px;height:61px;background:#e3e7ec"></div>
<svg style="left:753.3px;top:24.7px" width="17" height="17" viewBox="0 0 17 17"><path d="M0.3 0.3 H16.7 Q17.2 0.8 16.7 1.4 L10.85 7 V16.4 Q10.4 16.9 9.7 16.4 L6.1 13.1 V7 L0.3 1.4 Q-0.2 0.8 0.3 0.3 Z" fill="#98a1ab"/></svg>
<svg style="left:0;top:0" width="796.3" height="494.3" viewBox="876 966 796.3 494.3">
<path d="M895 1090.4 H1653.7 M895 1185.0 H1653.7 M895 1279.6 H1653.7" stroke="#e7eaee" stroke-width="1.8" fill="none"/>
<path d="M895.5 1374.3 L895.5 1092.9 L928.3 1086.6 L961.3 1089 L994.4 1091.4 L1027.4 1090.1 L1059.6 1084 L1092.8 1311.4 L1125.5 1364 L1158.5 1364.6 L1191 1358.8 L1224.3 1355.9 L1257.3 1359.2 L1290.3 1355.1 L1323.6 1358.4 L1356.6 1357.6 L1389.6 1355.3 L1422.5 1360.3 L1455.8 1358.1 L1488.9 1355.9 L1522.1 1359.2 L1555.2 1359.6 L1588.2 1360 L1621.3 1360 L1653.7 1372.6 L1653.7 1374.3 Z" fill="#000" fill-opacity="0.06"/>
<path d="M895 1374.3 H1653.7" stroke="#e2e4e6" stroke-width="1.6" fill="none"/>
<path d="M904.8 1066.8 H895 V1374.3" stroke="#c5ccd4" stroke-width="2" fill="none"/>
<path d="M895 1090.4 H905 M895 1185.0 H905 M895 1279.6 H905 M895 1374.3 H905" stroke="#c5ccd4" stroke-width="1.8" fill="none"/>
</svg>
<span class="t" style="left:34.1px;top:114.0px;font-size:20px;color:#a1aab4;transform:scaleX(1.1291);">60,000</span>
<span class="t" style="left:35.2px;top:209.0px;font-size:20px;color:#a1aab4;transform:scaleX(1.1024);">40,000</span>
<span class="t" style="left:34.1px;top:303.0px;font-size:20px;color:#a1aab4;transform:scaleX(1.1291);">20,000</span>
<span class="t" style="left:35.2px;top:398.0px;font-size:20px;color:#a1aab4;transform:scaleX(1.0545);">0</span>
<svg style="left:0;top:0" width="796.3" height="494.3" viewBox="876 966 796.3 494.3">
<path d="M895.5 1092.9 L928.3 1086.6 L961.3 1089 L994.4 1091.4 L1027.4 1090.1 L1059.6 1084 L1092.8 1311.4 L1125.5 1364 L1158.5 1364.6 L1191 1358.8 L1224.3 1355.9 L1257.3 1359.2 L1290.3 1355.1 L1323.6 1358.4 L1356.6 1357.6 L1389.6 1355.3 L1422.5 1360.3 L1455.8 1358.1 L1488.9 1355.9 L1522.1 1359.2 L1555.2 1359.6 L1588.2 1360 L1621.3 1360 L1653.7 1372.6" stroke="#5b626a" stroke-width="1.6" fill="none" stroke-linejoin="miter"/>
<path d="M895 1408.6 V1398.7 H1653.7" stroke="#c5ccd4" stroke-width="2" fill="none"/>
<path d="M994.1 1398.7 V1408.6 M1093.1 1398.7 V1408.6 M1192.2 1398.7 V1408.6 M1291.3 1398.7 V1408.6 M1390.4 1398.7 V1408.6 M1489.5 1398.7 V1408.6 M1588.6 1398.7 V1408.6" stroke="#c9cfd6" stroke-width="1.8" fill="none"/>
</svg>
<span class="t" style="left:87.5px;top:447.0px;font-size:20px;color:#a1aab4;transform:scaleX(1.0728);">03 AM</span>
<span class="t" style="left:186.4px;top:447.0px;font-size:20px;color:#a1aab4;transform:scaleX(1.0728);">06 AM</span>
<span class="t" style="left:285.3px;top:447.0px;font-size:20px;color:#a1aab4;transform:scaleX(1.0815);">09 AM</span>
<span class="t" style="left:386.5px;top:447.0px;font-size:20px;color:#a1aab4;transform:scaleX(0.9725);">12 PM</span>
<span class="t" style="left:484.9px;top:447.0px;font-size:20px;color:#a1aab4;transform:scaleX(1.0343);">03 PM</span>
<span class="t" style="left:583.5px;top:447.0px;font-size:20px;color:#a1aab4;transform:scaleX(1.0518);">06 PM</span>
<span class="t" style="left:682.9px;top:447.0px;font-size:20px;color:#a1aab4;transform:scaleX(1.0430);">09 PM</span>
</section>
<section class="card" id="sensor-activity" style="left:1692px;top:964px;width:796.2px;height:496.3px;border-top:2px solid #e3e6ea;">
<div class="abs" style="left:0;top:62px;width:796.2px;height:2px;background:#e3e7ec"></div>
<span class="t" style="left:18.8px;top:20.0px;font-size:24.8px;color:#434b54;transform:scaleX(1.0141);">Sensor Activity</span>
<div class="abs" style="left:728.2px;top:1px;width:2px;height:61px;background:#e3e7ec"></div>
<svg style="left:753.2px;top:24.7px" width="17" height="17" viewBox="0 0 17 17"><path d="M0.3 0.3 H16.7 Q17.2 0.8 16.7 1.4 L10.85 7 V16.4 Q10.4 16.9 9.7 16.4 L6.1 13.1 V7 L0.3 1.4 Q-0.2 0.8 0.3 0.3 Z" fill="#98a1ab"/></svg>
<span class="t" style="left:19.5px;top:86.0px;font-size:19.4px;color:#a1abb5;transform:scaleX(0.9074);">SENSOR</span>
<span class="t" style="left:415.2px;top:86.0px;font-size:19.4px;color:#a1abb5;transform:scaleX(0.9398);">ALARMS</span>
<span class="t" style="left:638.8px;top:86.0px;font-size:19.4px;color:#a1abb5;transform:scaleX(0.9357);">EVENT</span>
<div class="abs" style="left:0;top:127.9px;width:796.2px;height:86.1px;background:#f4f5f7"></div>
<span class="t" style="left:19.3px;top:144.0px;font-size:22px;color:#434b54;transform:scaleX(1.0017);">AWS Sensor</span>
<span class="t" style="left:19.5px;top:180.0px;font-size:19.3px;color:#a1abb5;transform:scaleX(0.9423);">AWS</span>
<div class="abs" style="left:414.1px;top:152.0px;width:55.8px;height:41.6px;border:2px solid #f5821f;border-radius:5.5px"></div>
<span class="t" style="left:426.0px;top:163.0px;font-size:18.8px;color:#f5821f;transform:scaleX(0.9836);">120</span>
<div class="abs" style="left:638.0px;top:152.0px;width:69.8px;height:41.6px;border:2px solid #1fb2d8;border-radius:5.5px"></div>
<span class="t" style="left:651.1px;top:163.0px;font-size:18.8px;color:#1ca9cd;transform:scaleX(1.0693);">360k</span>
<span class="t" style="left:18.3px;top:230.0px;font-size:22px;color:#434b54;transform:scaleX(1.0330);">USMAntoine</span>
<span class="t" style="left:19.5px;top:266.0px;font-size:19.3px;color:#a1abb5;transform:scaleX(0.9423);">AWS</span>
<div class="abs" style="left:414.1px;top:238.1px;width:45.7px;height:41.6px;border:2px solid #f5821f;border-radius:5.5px"></div>
<span class="t" style="left:427.0px;top:249.0px;font-size:18.8px;color:#f5821f;transform:scaleX(1.0125);">87</span>
<div class="abs" style="left:638.0px;top:238.1px;width:53.6px;height:41.6px;border:2px solid #1fb2d8;border-radius:5.5px"></div>
<span class="t" style="left:651.1px;top:249.0px;font-size:18.8px;color:#1ca9cd;transform:scaleX(0.8870);">21k</span>
<div class="abs" style="left:0;top:300.1px;width:796.2px;height:86.1px;background:#f4f5f7"></div>
<span class="t" style="left:19.3px;top:316.0px;font-size:22px;color:#434b54;transform:scaleX(1.0296);">Azure Sensor</span>
<span class="t" style="left:19.5px;top:352.0px;font-size:19.3px;color:#a1abb5;transform:scaleX(1.0031);">Azure</span>
<div class="abs" style="left:414.1px;top:324.2px;width:47.6px;height:41.6px;border:2px solid #f5821f;border-radius:5.5px"></div>
<span class="t" style="left:426.8px;top:335.0px;font-size:18.8px;color:#f5821f;transform:scaleX(1.0809);">24</span>
<div class="abs" style="left:638.0px;top:324.2px;width:55.2px;height:41.6px;border:2px solid #1fb2d8;border-radius:5.5px"></div>
<span class="t" style="left:650.5px;top:335.0px;font-size:18.8px;color:#1ca9cd;transform:scaleX(1.0230);">43k</span>
<div class="abs" style="left:0;top:386.2px;width:395.9px;height:86.1px;overflow:hidden">
<span class="t" style="left:19.3px;top:15.8px;font-size:22px;color:#434b54;transform:scaleX(1.0085);">cf341fb3-15ad-4bf8-9a29-e5a1e352ac</span>
</div>
<span class="t" style="left:19.5px;top:439.0px;font-size:19.3px;color:#a1abb5;transform:scaleX(0.9990);">Sensor Removed</span>
<div class="abs" style="left:414.1px;top:410.3px;width:35.5px;height:41.6px;border:2px solid #f5821f;border-radius:5.5px"></div>
<span class="t" style="left:426.8px;top:421.0px;font-size:18.8px;color:#f5821f;transform:scaleX(1.0300);">2</span>
<div class="abs" style="left:638.0px;top:410.3px;width:53.3px;height:41.6px;border:2px solid #1fb2d8;border-radius:5.5px"></div>
<span class="t" style="left:649.5px;top:421.0px;font-size:18.8px;color:#1ca9cd;transform:scaleX(0.9836);">139</span>
<div class="abs" style="left:0;top:474.3px;width:395.9px;height:2px;background:#dadee4"></div>
<div class="abs" style="left:395.9px;top:472.0px;width:400.3px;height:2px;background:#dadee4"></div>
</section>
</body></html>
